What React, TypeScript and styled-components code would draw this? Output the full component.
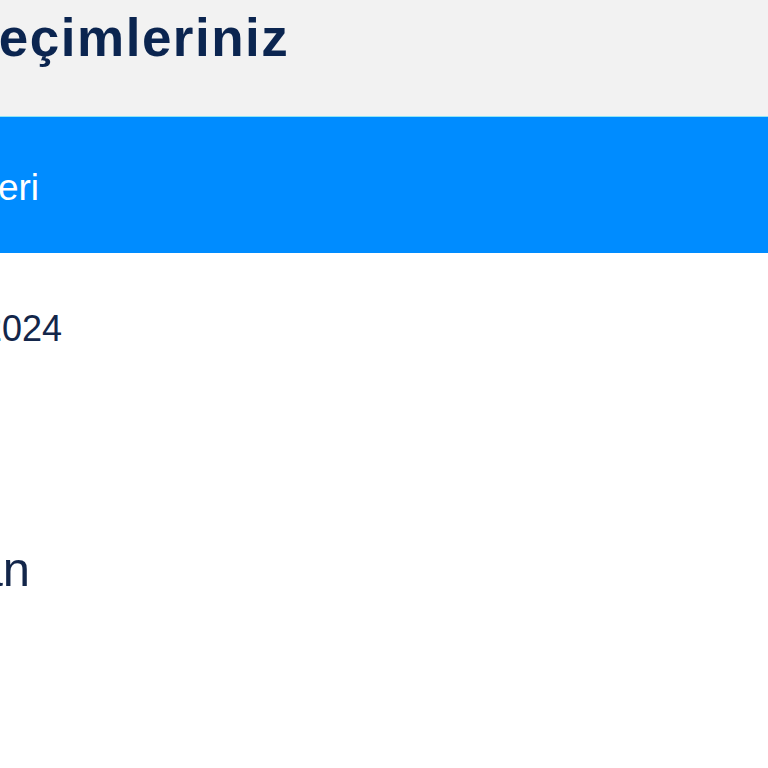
import React from 'react';
import styled, { createGlobalStyle } from 'styled-components';

const GlobalStyle = createGlobalStyle`
  html, body {
    margin: 0;
    padding: 0;
    background: #ffffff;
    font-family: "Liberation Sans", Arial, sans-serif;
    overflow: hidden;
  }
`;

const Page = styled.div`
  width: 768px;
  height: 768px;
  overflow: hidden;
  display: flex;
  flex-direction: column;
  background: #ffffff;
`;

const Header = styled.header`
  height: 116px;
  background: #f2f2f2;
  display: flex;
  align-items: flex-start;
  flex-shrink: 0;
`;

const Title = styled.h1<{ $shift: number }>`
  margin: 8px 0 0 ${(p) => p.$shift}px;
  font-size: 53px;
  font-weight: 700;
  letter-spacing: 1.5px;
  color: #0b2550;
  white-space: nowrap;
  line-height: 60px;
`;

const Band = styled.div`
  height: 137px;
  background: #008cff;
  border-top: 1px solid #8fe6f5;
  box-sizing: border-box;
  display: flex;
  align-items: center;
  flex-shrink: 0;
`;

const BandLabel = styled.span<{ $shift: number }>`
  margin: 6px 0 0 ${(p) => p.$shift}px;
  font-size: 37px;
  color: #ffffff;
  white-space: nowrap;
`;

const Body = styled.div`
  display: flex;
  flex-direction: column;
`;

const DateText = styled.div<{ $shift: number }>`
  margin: 56px 0 0 ${(p) => p.$shift}px;
  font-size: 36px;
  line-height: 40px;
  color: #13264a;
  white-space: nowrap;
`;

const BigText = styled.div<{ $shift: number }>`
  margin: 192px 0 0 ${(p) => p.$shift}px;
  font-size: 49px;
  line-height: 56px;
  color: #13264a;
  white-space: nowrap;
`;

export default function App() {
  return (
    <>
      <GlobalStyle />
      <Page>
        <Header>
          <Title $shift={-38}>Seçimleriniz</Title>
        </Header>
        <Band>
          <BandLabel $shift={-109}>Tercihleri</BandLabel>
        </Band>
        <Body>
          <DateText $shift={-18}>2024</DateText>
          <BigText $shift={-68}>Plan</BigText>
        </Body>
      </Page>
    </>
  );
}
